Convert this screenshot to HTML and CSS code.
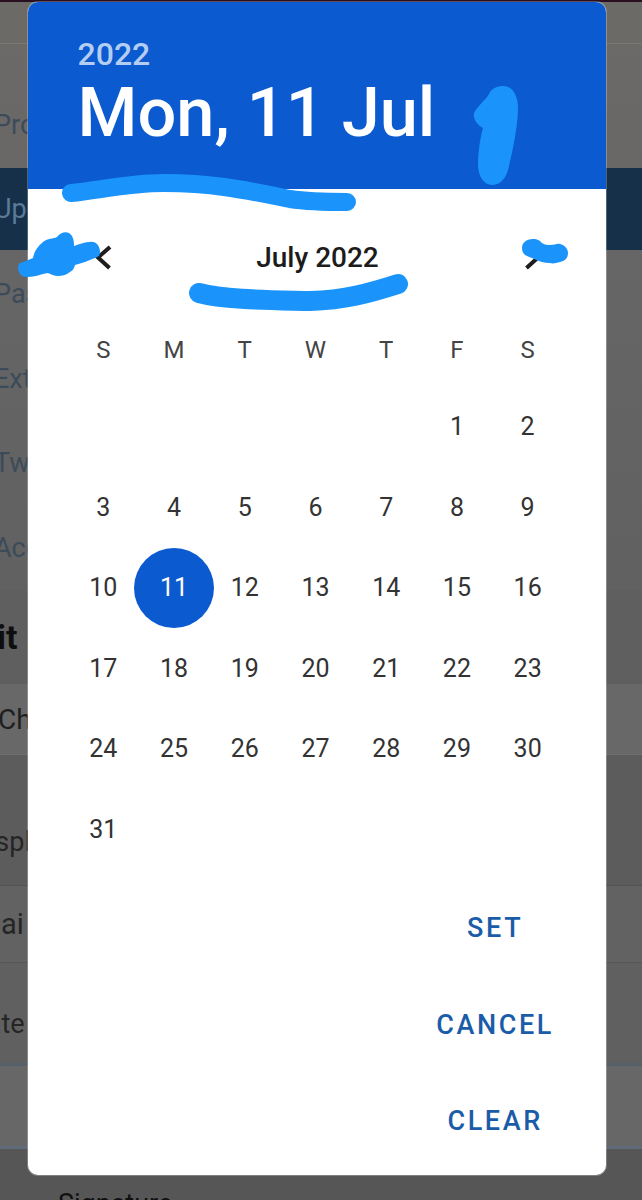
FILE: index.html
```html
<!DOCTYPE html>
<html lang="en">
<head>
<meta charset="utf-8">
<title>Date picker</title>
<link rel="stylesheet" href="styles.css">
</head>
<body>
<div class="page">
  <div class="status"></div>
  <div class="topbar"></div>
  <nav class="nav">
    <div class="nav-item">Profile</div>
    <div class="nav-item nav-active">Update</div>
    <div class="nav-item">Password</div>
    <div class="nav-item">External</div>
    <div class="nav-item">Two factor</div>
    <div class="nav-item">Account</div>
  </nav>
  <div class="edit"><span>Edit</span></div>
  <div class="choose"><span>Choose</span></div>
  <div class="field field-display"><span>Display</span></div>
  <div class="field field-email"><span>Emai</span></div>
  <div class="field field-date"><span>Date</span></div>
  <div class="field field-blank"></div>
  <div class="signature">Signature</div>
</div>

<section class="dialog">
  <header class="dialog-head">
    <div class="year">2022</div>
    <div class="date">Mon, 11 Jul</div>
  </header>
  <div class="month">
    <svg class="chev" viewBox="0 0 20 28"><path d="M15 4 3 14.500 14.500 25"/></svg>
    <div class="month-name">July 2022</div>
    <svg class="chev" viewBox="0 0 20 28"><path d="M5 4 17 14.500 5.500 25"/></svg>
  </div>
  <div class="cal">
    <div class="wd">S</div><div class="wd">M</div><div class="wd">T</div><div class="wd">W</div><div class="wd">T</div><div class="wd">F</div><div class="wd">S</div>
    <div></div><div></div><div></div><div></div><div></div><div class="d">1</div><div class="d">2</div>
    <div class="d">3</div><div class="d">4</div><div class="d">5</div><div class="d">6</div><div class="d">7</div><div class="d">8</div><div class="d">9</div>
    <div class="d">10</div><div class="d sel"><span>11</span></div><div class="d">12</div><div class="d">13</div><div class="d">14</div><div class="d">15</div><div class="d">16</div>
    <div class="d">17</div><div class="d">18</div><div class="d">19</div><div class="d">20</div><div class="d">21</div><div class="d">22</div><div class="d">23</div>
    <div class="d">24</div><div class="d">25</div><div class="d">26</div><div class="d">27</div><div class="d">28</div><div class="d">29</div><div class="d">30</div>
    <div class="d">31</div>
  </div>
  <div class="actions">
    <div class="btn">SET</div>
    <div class="btn">CANCEL</div>
    <div class="btn">CLEAR</div>
  </div>
</section>

<svg class="scribbles" viewBox="0 0 642 1200">
  <path class="stroke" d="M71 193C100 190 130 183 164 183C215 183 250 191 290 199C310 202 330 202 347 202"/>
  <path class="stroke stroke-wide" d="M199 293C225 300 270 300 310 301C345 300 370 293 398 284"/>
  <path class="fill" d="M503 86C513 86 518 96 518 108C518 125 513 150 508 170C505 181 498 185 492 185C484 185 478 176 478 165C478 150 481 135 483 128C476 124 473 118 474 113C478 105 488 98 490 92C493 88 498 86 503 86Z"/>
  <path class="fill" d="M20 263C25 261 29 260 33 258C34 252 37 247 43 242C48 238 53 239 57 237C61 232 68 230 72 236C74 240 74 243 74 246C80 244 85 242 90 242C96 241 100 246 100 252C100 256 98 257 95 258C88 261 82 263 75 265C74 269 72 271 70 272C66 275 62 276 58 276C54 276 51 274 48 273C41 274 35 277 28 277C21 278 18 272 18 267C18 265 19 264 20 263Z"/>
  <path class="fill" d="M522 248C522 243 526 239 533 239C538 239 540 241 542 243C545 245 548 245 550 245C555 245 557 243 560 244C565 245 568 249 568 253C568 258 565 261 560 262C556 263 553 264 550 263C544 263 538 261 532 258C529 257 527 256 525 255C523 253 522 251 522 248Z"/>
</svg>
</body>
</html>
```

FILE: styles.css
```css
* { box-sizing: border-box; }
html, body { margin: 0; padding: 0; }
body {
  width: 642px;
  height: 1200px;
  overflow: hidden;
  position: relative;
  background: #5f5f5f;
  font-family: Roboto, "Liberation Sans", sans-serif;
}
.page { display: flex; flex-direction: column; height: 1200px; overflow: hidden; font-size: 27px; color: #2a2a2a; }
.page > * { flex: none; white-space: nowrap; }
.status { height: 2px; background: #2a0f20; }
.topbar { height: 42px; background: #6b6a67; border-bottom: 1px solid #777773; }
.nav { height: 546px; padding-top: 39px; display: flex; flex-direction: column; background: linear-gradient(#6c6a68, #666 35%, #616161); }
.nav-item { height: 84.5px; display: flex; align-items: center; color: #3c4b5a; margin-left: -6px; }
.nav-active { height: 82px; margin-left: 0; padding-left: 0; text-indent: -6px; background: #16304a; color: #5b7b99; margin-bottom: 2.500px; }
.edit { height: 94px; display: flex; align-items: center; background: #5f5f5f; font-weight: 700; font-size: 34px; color: #0e0e0e; }
.edit span { margin-left: -41px; }
.choose { height: 71px; display: flex; align-items: center; background: #686868; color: #1f1f1f; border-bottom: 1px solid #6e6e6e; font-size: 28px; }
.choose span { margin-left: -2px; }
.field { display: flex; align-items: center; background: #5c5c5c; border-bottom: 1px solid #525252; color: #252525; }
.field-display { height: 131px; align-items: flex-end; padding-bottom: 27px; }
.field-display span { margin-left: -29px; }
.field-email { height: 77px; background: #626262; border-bottom-color: #565656; font-size: 29px; }
.field-email span { margin-left: -41px; }
.field-date { height: 103px; background: #606060; border-bottom: 3px solid #56606a; padding-top: 22px; }
.field-date span { margin-left: -31px; }
.field-blank { height: 83px; background: #676767; border-bottom: 3px solid #5f6b78; }
.signature { height: 52px; padding: 39px 0 0 58px; background: #565656; color: #101010; font-size: 27px; }

.dialog {
  position: absolute;
  left: 28px;
  top: 2px;
  width: 578px;
  height: 1173px;
  background: #fff;
  border-radius: 10px;
  overflow: hidden;
  display: flex;
  flex-direction: column;
  box-shadow: 0 0 0 1px rgba(255, 255, 255, 0.25);
}
.dialog-head { height: 187px; padding: 32px 0 0 49.500px; background: #0b5acf; }
.year { font-size: 32px; line-height: 40px; color: #b3cdf3; font-weight: 500; }
.date { font-size: 68.500px; line-height: 78px; font-weight: 500; color: #fff; white-space: nowrap; }
.month { height: 136px; padding: 0 65px 0 67px; display: flex; align-items: center; justify-content: space-between; }
.month-name { font-size: 28px; font-weight: 500; color: #1c1c1c; margin-left: -1px; }
.chev { width: 20px; height: 28px; fill: none; stroke: #1e1e1e; stroke-width: 4; }
.cal { margin: 0 43px 0 40px; display: grid; grid-template-columns: repeat(7, minmax(0, 1fr)); grid-template-rows: 61.250px repeat(6, 80.5px); font-size: 25px; color: #333; }
.wd, .d { display: flex; align-items: center; justify-content: center; }
.wd { height: 49px; font-size: 24px; color: #444; }
.sel { color: #fff; }
.sel span { width: 80px; height: 80px; border-radius: 50%; background: #0b5acf; display: flex; align-items: center; justify-content: center; flex: none; }
.actions { margin-top: 10.500px; align-self: flex-end; padding-right: 52px; display: flex; flex-direction: column; align-items: center; }
.btn { height: 96.500px; display: flex; align-items: center; font-size: 27px; font-weight: 500; letter-spacing: 2.6px; color: #1b5ca8; }

.scribbles { position: absolute; left: 0; top: 0; width: 642px; height: 1200px; pointer-events: none; }
.stroke { fill: none; stroke: #1a94fb; stroke-width: 18; stroke-linecap: round; }
.stroke-wide { stroke-width: 20; }
.fill { fill: #1a94fb; }
```
